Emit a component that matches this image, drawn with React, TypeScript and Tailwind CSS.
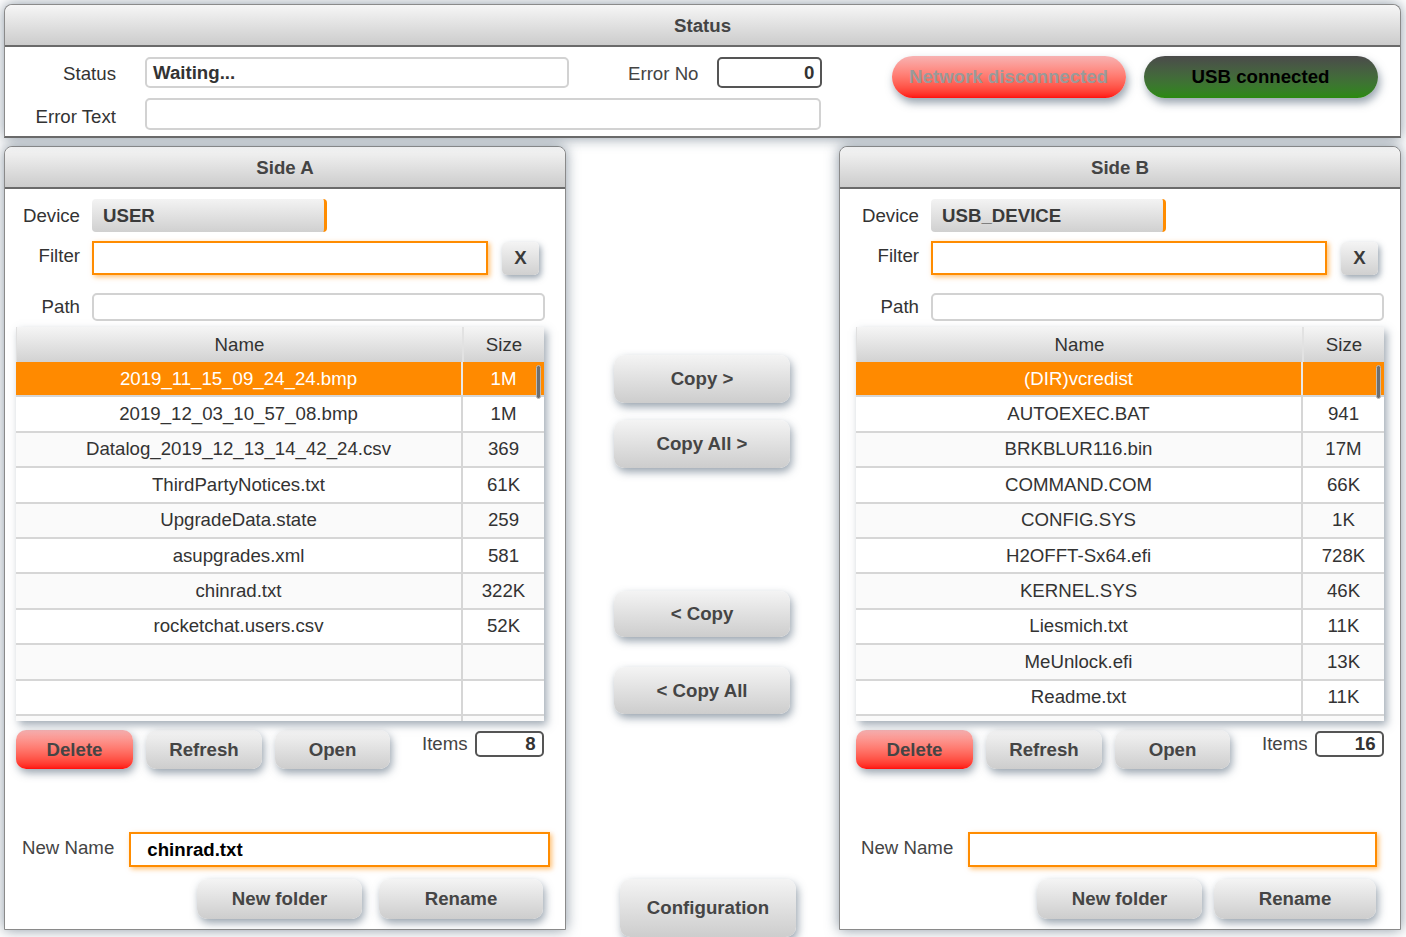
import React from "react";

const FONT = "font-['Liberation_Sans',Arial,sans-serif]";

const btn =
  "flex items-center justify-center rounded-[10px] bg-gradient-to-b from-[#f4f4f4] to-[#cdcdcd] text-[18.67px] font-bold text-[#454545] shadow-[2px_4px_8px_rgba(70,90,110,0.55)]";
const redBtn =
  "flex items-center justify-center rounded-[10px] bg-gradient-to-b from-[#f7b0b0] to-[#ff0a0a] text-[18.67px] font-bold text-[#454545] shadow-[2px_4px_8px_rgba(70,90,110,0.55)]";
const orangeInput =
  "border-2 border-[#ff8c00] bg-white shadow-[2px_2px_5px_rgba(255,140,0,0.55)]";
const grayInput = "rounded-[5px] border-2 border-[#d2d2d2] bg-white";

function PanelHeader({ title }: { title: string }) {
  return (
    <div className="h-[42px] shrink-0 pt-[2px] rounded-t-[8px] border-b-2 border-[#6a6a6a] bg-gradient-to-b from-[#f6f6f6] to-[#cccccc] flex items-center justify-center text-[18.67px] font-bold text-[#444]">
      {title}
    </div>
  );
}

type SideProps = {
  title: string;
  device: string;
  rows: string[][];
  items: string;
  newName: string;
  labelW: string;
  tableL: string;
  nnL: string;
  nnW: string;
  bottomL: string;
  renameCls: string;
};

function Side(p: SideProps) {
  return (
    <div className="w-[562px] h-[784px] flex flex-col rounded-t-[8px] border border-[#8a8a8a] bg-white shadow-[0_0_14px_rgba(60,80,100,0.6)]">
      <PanelHeader title={p.title} />
      <div className="flex flex-col text-[18.67px] text-[#333]">
        <div className="mt-[10px] flex items-center h-[33px]">
          <div className={`${p.labelW} text-right`}>Device</div>
          <div className="ml-[12px] w-[235px] h-[33px] rounded-[4px] border-r-[3px] border-[#ff8c00] bg-gradient-to-b from-[#f3f3f3] to-[#d0d0d0] flex items-center pl-[11px] font-bold text-[#3a3a3a]">
            {p.device}
          </div>
        </div>
        <div className="mt-[9px] flex items-center h-[34px]">
          <div className={`${p.labelW} text-right -mt-[4px]`}>Filter</div>
          <div className={`ml-[12px] w-[396px] h-[34px] ${orangeInput}`} />
          <div className="ml-[14px] w-[37px] h-[33px] rounded-[5px] bg-gradient-to-b from-[#f4f4f4] to-[#d0d0d0] shadow-[2px_3px_6px_rgba(70,90,110,0.55)] flex items-center justify-center font-bold text-[#3a3a3a]">
            X
          </div>
        </div>
        <div className="mt-[18px] flex items-center h-[28px]">
          <div className={`${p.labelW} text-right`}>Path</div>
          <div className={`ml-[12px] w-[453px] h-[28px] ${grayInput}`} />
        </div>
        <div className={`${p.tableL} mt-[6px] w-[528px] h-[394px] relative overflow-hidden bg-white shadow-[3px_4px_8px_rgba(70,90,110,0.5)]`}>
          <div className="h-[35px] flex bg-gradient-to-b from-[#f5f5f5] to-[#d2d2d2] border-l border-[#e0e0e0]">
            <div className="w-[447px] border-r-2 border-[#e2e2e2] flex items-center justify-center">Name</div>
            <div className="flex-1 flex items-center justify-center">Size</div>
          </div>
          {p.rows.map((r, i) => {
            const sel = i === 0;
            const bg = sel ? "bg-[#ff8a00] text-white" : i % 2 === 0 ? "bg-[#fafafa]" : "bg-white";
            return (
              <div key={i} className={`h-[35.4px] flex border-b-2 border-[#d6d6d6] ${bg}`}>
                <div className={`w-[447px] border-r-2 ${sel ? "border-[#e8e8e8]" : "border-[#d6d6d6]"} flex items-center justify-center`}>
                  {r[0]}
                </div>
                <div className="flex-1 flex items-center justify-center">{r[1]}</div>
              </div>
            );
          })}
          <div className="absolute right-[3px] top-[38px] w-[5px] h-[34px] rounded-full bg-[#6f6f6f] border border-[#bbb]" />
        </div>
        <div className={`${p.tableL} mt-[9px] flex items-start h-[40px]`}>
          <div className={`${redBtn} w-[117px] h-[39px]`}>Delete</div>
          <div className={`${btn} ml-[13px] w-[116px] h-[39px]`}>Refresh</div>
          <div className={`${btn} ml-[13px] w-[115px] h-[39px]`}>Open</div>
          <div className="ml-[32px] flex items-center">
            <span className="text-[#444]">Items</span>
            <div className="ml-[7px] w-[69px] h-[26px] rounded-[5px] border-2 border-[#555] flex items-center justify-end pr-[6px] font-bold text-[#333]">
              {p.items}
            </div>
          </div>
        </div>
        <div className={`${p.nnL} mt-[62px] flex items-center h-[35px]`}>
          <div className="text-[#444] -mt-[4px]">New Name</div>
          <div className={`ml-[15px] ${p.nnW} h-[35px] ${orangeInput} flex items-center pl-[16px] font-bold text-black`}>
            {p.newName}
          </div>
        </div>
        <div className={`${p.bottomL} mt-[12px] flex items-center`}>
          <div className={`${btn} w-[165px] h-[40px]`}>New folder</div>
          <div className={`${btn} ${p.renameCls} h-[40px]`}>Rename</div>
        </div>
      </div>
    </div>
  );
}

const rowsA = [
  ["2019_11_15_09_24_24.bmp", "1M"],
  ["2019_12_03_10_57_08.bmp", "1M"],
  ["Datalog_2019_12_13_14_42_24.csv", "369"],
  ["ThirdPartyNotices.txt", "61K"],
  ["UpgradeData.state", "259"],
  ["asupgrades.xml", "581"],
  ["chinrad.txt", "322K"],
  ["rocketchat.users.csv", "52K"],
  ["", ""],
  ["", ""],
  ["", ""],
];

const rowsB = [
  ["(DIR)vcredist", ""],
  ["AUTOEXEC.BAT", "941"],
  ["BRKBLUR116.bin", "17M"],
  ["COMMAND.COM", "66K"],
  ["CONFIG.SYS", "1K"],
  ["H2OFFT-Sx64.efi", "728K"],
  ["KERNEL.SYS", "46K"],
  ["Liesmich.txt", "11K"],
  ["MeUnlock.efi", "13K"],
  ["Readme.txt", "11K"],
  ["", ""],
];

export default function App() {
  return (
    <div className={`w-[1406px] h-[937px] overflow-hidden bg-white pt-[4px] px-[4px] ${FONT}`}>
      {/* Status panel */}
      <div className="relative z-10 w-[1397px] h-[134px] flex flex-col rounded-t-[8px] border border-[#8a8a8a] border-b-2 border-b-[#6a6a6a] bg-white shadow-[0_0_14px_rgba(60,80,100,0.6)]">
        <PanelHeader title="Status" />
        <div className="flex text-[18.67px] text-[#333]">
          <div className="flex flex-col">
            <div className="mt-[10px] flex items-center h-[31px]">
              <div className="w-[111px] text-right mt-[3px]">Status</div>
              <div className={`ml-[29px] w-[424px] h-[31px] ${grayInput} flex items-center pl-[6px] font-bold text-[#333]`}>
                Waiting...
              </div>
              <div className="ml-[59px] text-[#444] mt-[3px]">Error No</div>
              <div className="ml-[18px] w-[105px] h-[31px] rounded-[5px] border-2 border-[#555] flex items-center justify-end pr-[5px] font-bold">
                0
              </div>
            </div>
            <div className="mt-[10px] flex items-center h-[32px]">
              <div className="w-[111px] text-right mt-[5px]">Error Text</div>
              <div className={`ml-[29px] w-[676px] h-[32px] ${grayInput}`} />
            </div>
          </div>
          <div className="ml-[70px] mt-[9px] flex gap-[18px]">
            <div className="w-[234px] h-[42px] rounded-full bg-gradient-to-b from-[#f7b2b2] to-[#ff0c0c] shadow-[2px_5px_9px_rgba(70,90,110,0.55)] flex items-center justify-center font-bold text-[#9a9a9a]">
              Network disconnected
            </div>
            <div className="w-[234px] h-[42px] rounded-full bg-gradient-to-b from-[#4a4a4a] to-[#2a8a0c] shadow-[2px_5px_9px_rgba(70,90,110,0.55)] flex items-center justify-center font-bold text-black">
              USB connected
            </div>
          </div>
        </div>
      </div>

      <div className="mt-[8px] flex">
        <Side
          title="Side A"
          device="USER"
          rows={rowsA}
          items="8"
          newName="chinrad.txt"
          labelW="w-[75px]"
          tableL="ml-[11px]"
          nnL="ml-[17px]"
          nnW="w-[421px]"
          bottomL="ml-[192px]"
          renameCls="ml-[17px] w-[164px]"
        />
        <div className="w-[273px] flex flex-col">
          <div className={`${btn} ml-[48px] mt-[209px] w-[176px] h-[48px]`}>Copy &gt;</div>
          <div className={`${btn} ml-[48px] mt-[17px] w-[176px] h-[48px]`}>Copy All &gt;</div>
          <div className={`${btn} ml-[48px] mt-[123px] w-[176px] h-[46px]`}>&lt; Copy</div>
          <div className={`${btn} ml-[48px] mt-[30px] w-[176px] h-[47px]`}>&lt; Copy All</div>
          <div className={`${btn} ml-[54px] mt-[165px] w-[176px] h-[58px]`}>Configuration</div>
        </div>
        <Side
          title="Side B"
          device="USB_DEVICE"
          rows={rowsB}
          items="16"
          newName=""
          labelW="w-[79px]"
          tableL="ml-[16px]"
          nnL="ml-[21px]"
          nnW="w-[409px]"
          bottomL="ml-[197px]"
          renameCls="ml-[12px] w-[162px]"
        />
      </div>
    </div>
  );
}
